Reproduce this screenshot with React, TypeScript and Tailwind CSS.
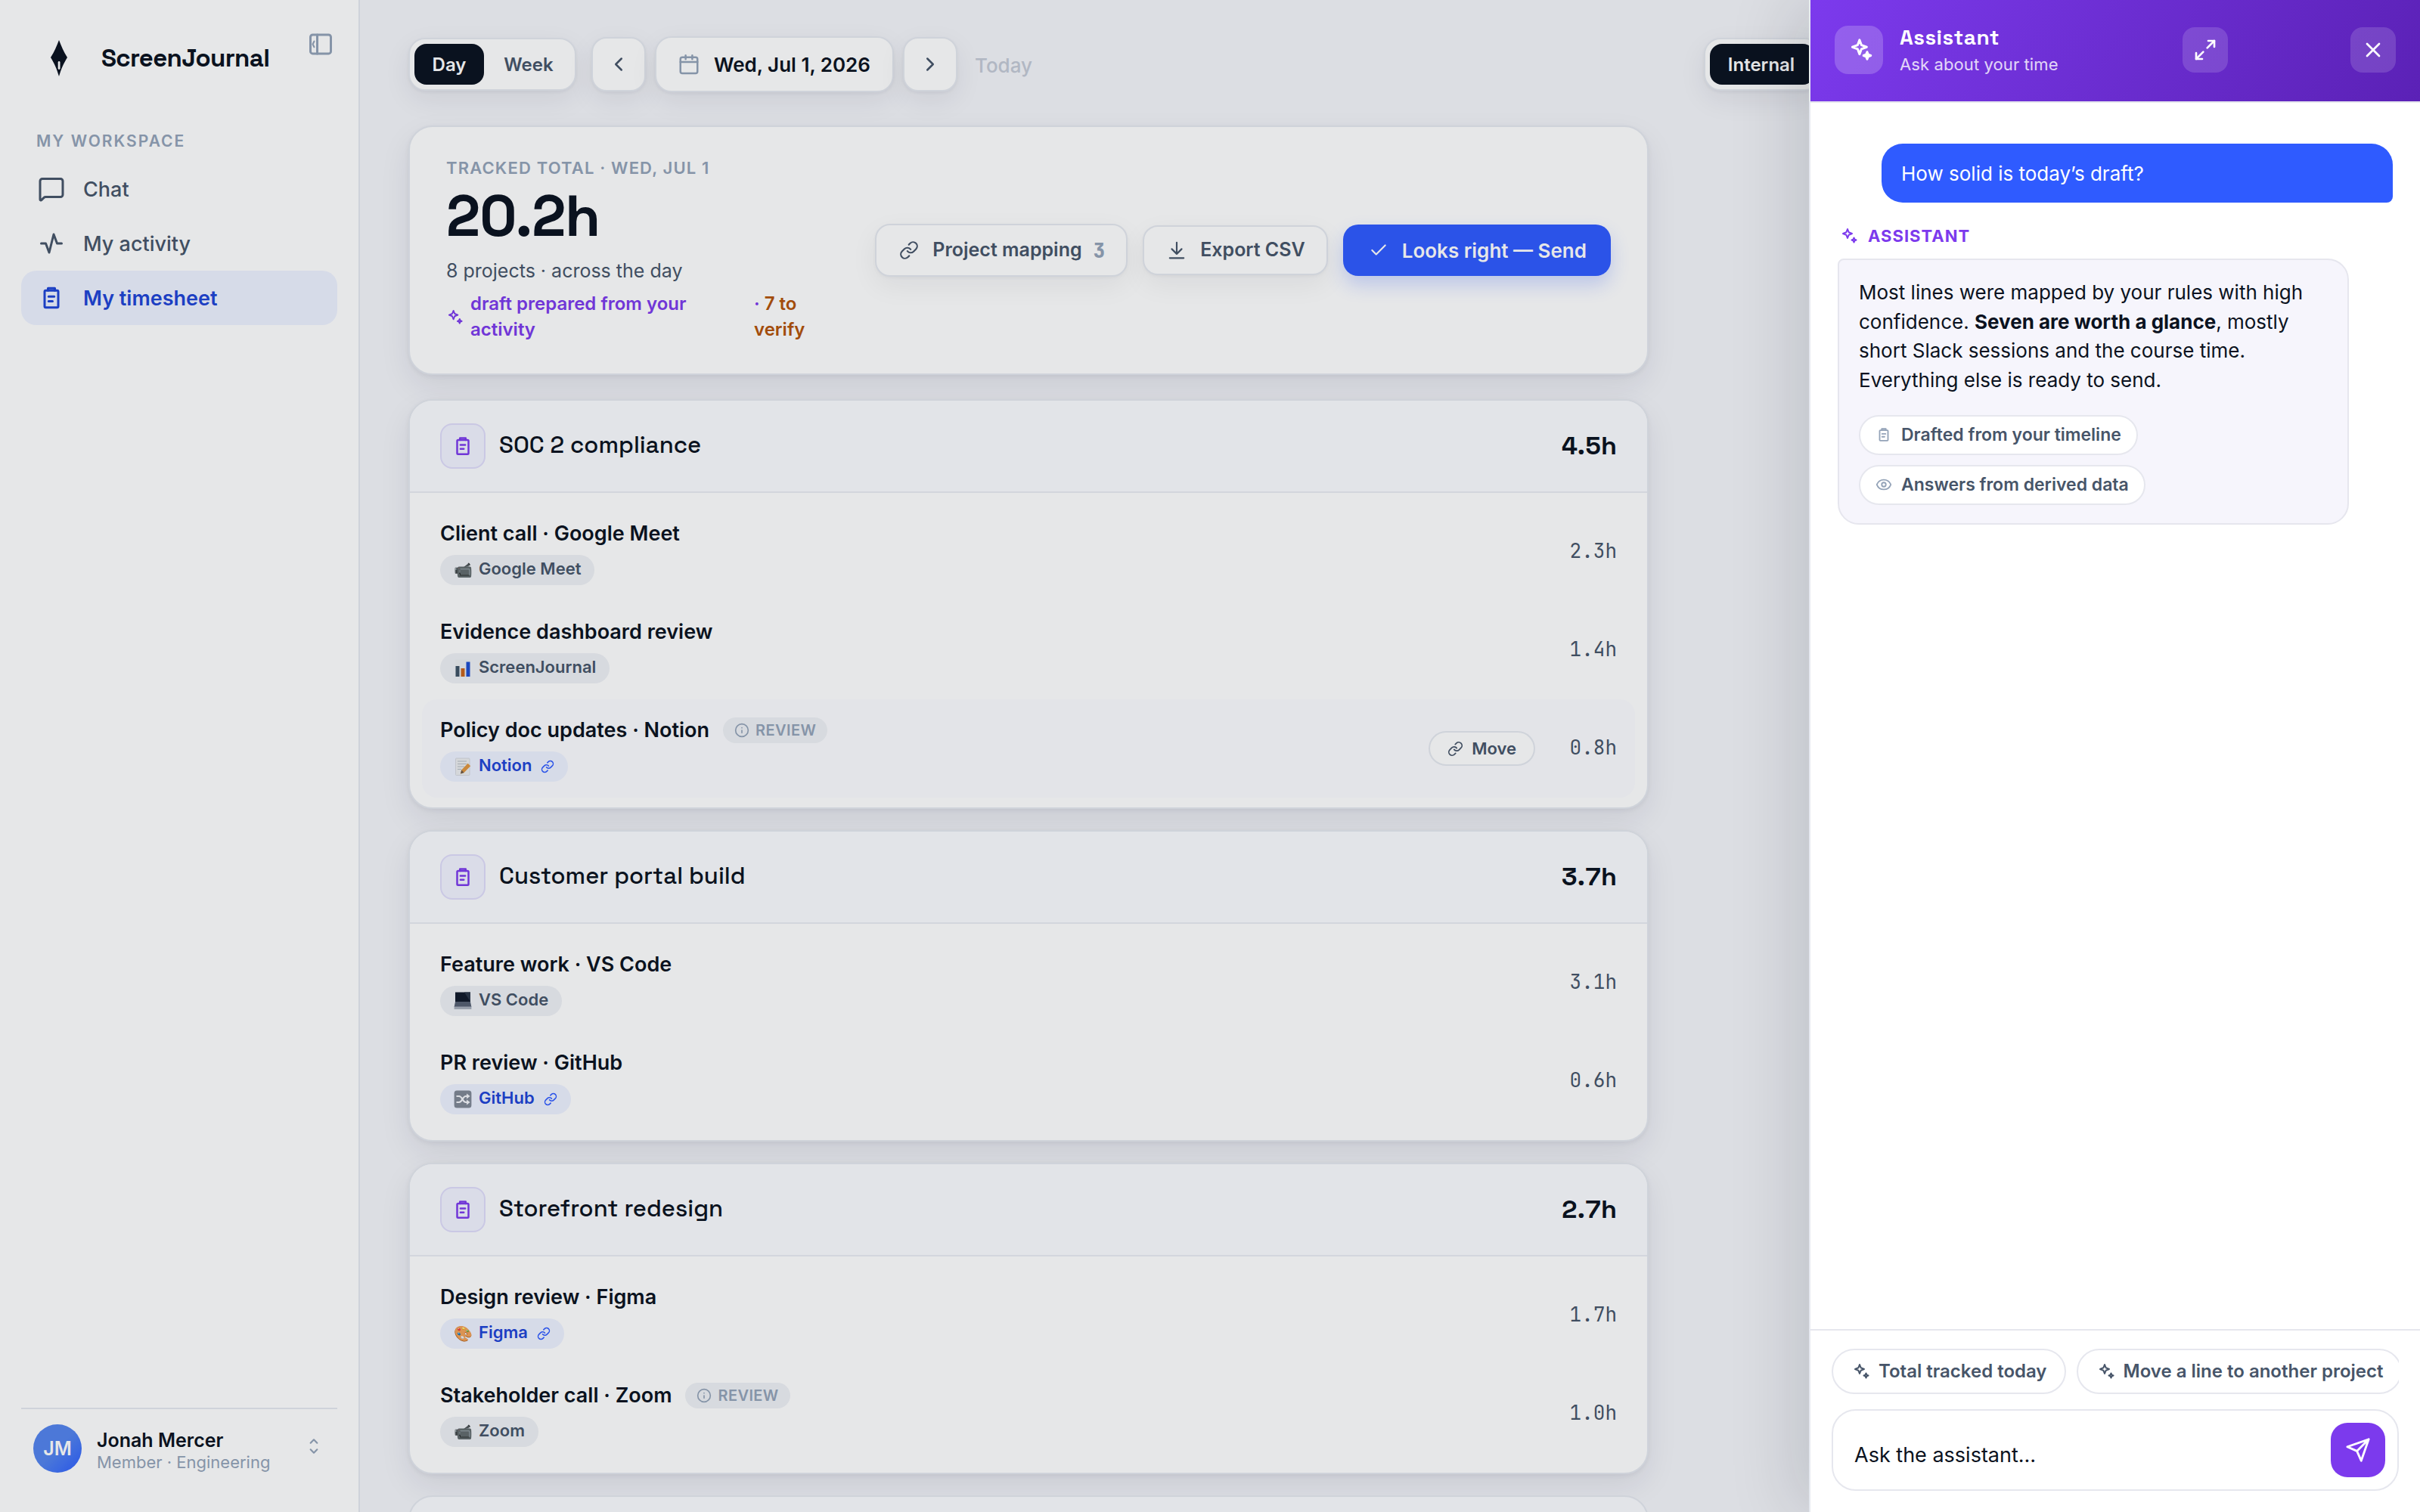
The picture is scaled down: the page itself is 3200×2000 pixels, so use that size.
import React from "react";
import {
  Check,
  ChevronLeft,
  ChevronRight,
  Eye,
  Info,
  Link,
  Maximize2,
  MessageSquare,
  X,
} from "lucide-react";

type AppIcon = "camera" | "chart" | "memo" | "laptop" | "shuffle" | "palette";

type Line = {
  title: string;
  app: string;
  icon: AppIcon;
  hours: string;
  linked?: boolean;
  review?: boolean;
  active?: boolean;
};

type Project = {
  name: string;
  total: string;
  lines: Line[];
};

const projects: Project[] = [
  {
    name: "SOC 2 compliance",
    total: "4.5h",
    lines: [
      { title: "Client call · Google Meet", app: "Google Meet", icon: "camera", hours: "2.3h" },
      { title: "Evidence dashboard review", app: "ScreenJournal", icon: "chart", hours: "1.4h" },
      {
        title: "Policy doc updates · Notion",
        app: "Notion",
        icon: "memo",
        hours: "0.8h",
        linked: true,
        review: true,
        active: true,
      },
    ],
  },
  {
    name: "Customer portal build",
    total: "3.7h",
    lines: [
      { title: "Feature work · VS Code", app: "VS Code", icon: "laptop", hours: "3.1h" },
      { title: "PR review · GitHub", app: "GitHub", icon: "shuffle", hours: "0.6h", linked: true },
    ],
  },
  {
    name: "Storefront redesign",
    total: "2.7h",
    lines: [
      { title: "Design review · Figma", app: "Figma", icon: "palette", hours: "1.7h", linked: true },
      { title: "Stakeholder call · Zoom", app: "Zoom", icon: "camera", hours: "1.0h", review: true },
    ],
  },
];

type IconProps = { size: number; className?: string };

function Svg({ size, className, children }: IconProps & { children: React.ReactNode }) {
  return (
    <svg
      width={size}
      height={size}
      viewBox="0 0 24 24"
      fill="none"
      stroke="currentColor"
      strokeWidth="2"
      strokeLinecap="round"
      strokeLinejoin="round"
      className={`shrink-0 ${className ?? ""}`}
    >
      {children}
    </svg>
  );
}

function Clipboard(props: IconProps) {
  return (
    <Svg {...props}>
      <path d="M9 5.5V3.5h6v2" />
      <rect x="6" y="5.5" width="12" height="15" rx="1" />
      <path d="M9.5 10.8h5M9.5 15h3.5" />
    </Svg>
  );
}

function Sparkles(props: IconProps) {
  return (
    <Svg {...props}>
      <path d="M9 3l1.7 4.3L15 9l-4.3 1.7L9 15l-1.7-4.3L3 9l4.3-1.7z" />
      <path d="M17.5 14.5l.9 2.1 2.1.9-2.1.9-.9 2.1-.9-2.1-2.1-.9 2.1-.9z" />
    </Svg>
  );
}

function SparklesHeader(props: IconProps) {
  return (
    <Svg {...props}>
      <path d="M12.6 3.2l1.7 4.6 4.6 1.7-4.6 1.7-1.7 4.6-1.7-4.6-4.6-1.7 4.6-1.7z" />
      <path d="M19.3 13.8l.9 2.3 2.3.9-2.3.9-.9 2.3-.9-2.3-2.3-.9 2.3-.9z" fill="currentColor" />
    </Svg>
  );
}

function Calendar(props: IconProps) {
  return (
    <Svg {...props}>
      <rect x="3" y="4.5" width="18" height="17" rx="2" />
      <path d="M8.5 2.5v4M15.5 2.5v4M3 9.5h18" />
    </Svg>
  );
}

function Download(props: IconProps) {
  return (
    <Svg {...props}>
      <path d="M12 2.5v14M6 10.5l6 6 6-6M3.5 21.5h17" />
    </Svg>
  );
}

// small colour glyphs in the app badges, 24x24 each
function AppGlyph({ icon }: { icon: AppIcon }) {
  if (icon === "palette") {
    return <span className="w-[24px] text-[20px] leading-none">🎨</span>;
  }
  if (icon === "camera") {
    return <span className="w-[24px] text-[20px] leading-none grayscale-70">📹</span>;
  }
  return (
    <svg width="24" height="24" viewBox="0 0 24 24" className="shrink-0">
      {icon === "chart" && (
        <>
          <rect x="2" y="0.5" width="20" height="23" fill="#eceff1" />
          <rect x="2.5" y="9" width="5" height="14" fill="#3f5366" />
          <rect x="9.5" y="12" width="5" height="11" fill="#c8641b" />
          <rect x="16.5" y="3.5" width="5" height="19.5" fill="#1f4fd0" />
        </>
      )}
      {icon === "memo" && (
        <>
          <rect x="2.5" y="1" width="18.5" height="22.5" rx="1" fill="#eceef0" stroke="#cfd3d8" strokeWidth="0.8" />
          <path d="M5 5h12M5 8.5h12M5 12h9M5 15.5h5" stroke="#b4bac2" strokeWidth="1.2" />
          <path d="M9 21.5l1.2-5L18.6 7.8l3.6 3.4-8.6 8.9z" fill="#e0963f" />
          <path d="M9 21.5l1.2-5 3.4 3.6z" fill="#6b5a4b" />
        </>
      )}
      {icon === "laptop" && (
        <>
          <path d="M2 0.5h20v12.5H2z" fill="#111a2b" />
          <path d="M14 0.5h8v12.5z" fill="#2b3648" />
          <path d="M2 13h20l1.4 7H0.6z" fill="#566072" />
          <path d="M0.6 19.5h22.8v3.5H0.6z" fill="#a9b0bd" />
        </>
      )}
      {icon === "shuffle" && (
        <>
          <rect x="0.6" y="0.6" width="22.8" height="22.8" rx="3.5" fill="#808896" />
          <g fill="none" stroke="#f4f5fa" strokeWidth="2.2">
            <path d="M3.5 8h3.5c4.5 0 4.5 8 9 8h2.5M3.5 16h3.5c4.5 0 4.5-8 9-8h2.5" />
          </g>
          <path d="M17 4.4L21.6 8 17 11.6zM17 12.4l4.6 3.6-4.6 3.6z" fill="#f4f5fa" />
        </>
      )}
    </svg>
  );
}

function Sidebar() {
  return (
    <aside className="flex w-[476px] shrink-0 flex-col border-r-2 border-[#e6e9f0] bg-white px-[28px]">
      <div className="flex h-[164px] items-start justify-between pr-[4px] pl-[18px]">
        <div className="flex items-center gap-[24px] pt-[45px]">
          <svg width="64" height="64" viewBox="0 0 64 64">
            <path d="M32 8c3 8 6 15 11 23-5 8-8 15-11 25-3-10-6-17-11-25 5-8 8-15 11-23z" fill="#0b1220" />
            <rect x="30.7" y="36" width="2.8" height="11" rx="1.4" fill="#ffffff" />
          </svg>
          <span className="font-['Space_Grotesk'] text-[33px] leading-[40px] font-semibold tracking-[-0.66px] text-[#0b1220]">
            ScreenJournal
          </span>
        </div>
        <Svg size={36} className="mt-[40px] text-[#94a3b8]">
          <rect x="3" y="4" width="18" height="16.6" rx="2" />
          <path d="M9 4v16.6" />
          <path d="M6.3 9.8L5 12.3l1.3 2.5" strokeWidth="1.4" />
        </Svg>
      </div>

      <p className="pt-[2px] pl-[20px] text-[21px] leading-[42px] font-semibold tracking-[2px] text-[#94a3b8]">
        MY WORKSPACE
      </p>

      <nav className="mt-[6px] flex flex-col text-[27px] text-[#475569]">
        <a className="flex h-[72px] items-center gap-[24px] pl-[22px] font-medium">
          <MessageSquare size={36} />
          <span className="pt-[2px]">Chat</span>
        </a>
        <a className="flex h-[72px] items-center gap-[24px] pl-[22px] font-medium">
          <Svg size={36}>
            <path d="M3 12h4l3 8 4-16 3 8h4" />
          </Svg>
          <span className="pt-[2px]">My activity</span>
        </a>
        <a className="flex h-[72px] items-center gap-[24px] rounded-[20px] bg-[#eef2ff] pl-[22px] font-semibold text-[#1f45d6]">
          <Clipboard size={36} />
          <span className="pt-[2px]">My timesheet</span>
        </a>
      </nav>

      <div className="mt-auto flex h-[138px] items-start border-t-2 border-[#e6e9f0] pt-[20px] pr-[18px] pl-[16px]">
        <div className="flex size-[64px] items-center justify-center rounded-full bg-linear-135 from-[#5484ee] from-50% to-[#2f5bff] pt-[2px] text-[25px] font-semibold text-white">
          JM
        </div>
        <div className="ml-[20px] flex flex-col pt-[6px]">
          <span className="text-[25px] leading-[31px] font-semibold text-[#0b1220]">Jonah Mercer</span>
          <span className="text-[22px] leading-[26px] text-[#94a3b8]">Member · Engineering</span>
        </div>
        <Svg size={26} className="mt-[16px] ml-auto text-[#94a3b8]">
          <path d="M8 8l4-4 4 4M8 16l4 4 4-4" />
        </Svg>
      </div>
    </aside>
  );
}

function Toolbar() {
  return (
    <div className="flex h-[74px] w-[1868px] items-center">
      <div className="flex h-[70px] gap-[4px] rounded-[22px] border-2 border-[#e6e9f0] bg-white p-[6px] text-[24px] font-semibold shadow-[0_2px_4px_rgba(11,18,32,0.05),0_12px_36px_rgba(11,18,32,0.07)]">
        <button className="w-[92px] rounded-[16px] bg-[#0b1220] pt-[1px] text-white">Day</button>
        <button className="w-[110px] rounded-[16px] pt-[1px] text-[#475569]">Week</button>
      </div>
      <button className="ml-[20px] flex size-[72px] items-center justify-center rounded-[20px] border-2 border-[#e6e9f0] bg-white text-[#475569] shadow-[0_2px_4px_rgba(11,18,32,0.05),0_12px_36px_rgba(11,18,32,0.07)]">
        <ChevronLeft size={30} />
      </button>
      <button className="ml-[12px] flex h-[74px] items-center gap-[18px] rounded-[22px] border-2 border-[#e6e9f0] bg-white pr-[29px] pl-[28px] text-[26px] font-semibold text-[#0b1220] shadow-[0_2px_4px_rgba(11,18,32,0.05),0_12px_36px_rgba(11,18,32,0.07)]">
        <Calendar size={30} className="text-[#94a3b8]" />
        Wed, Jul 1, 2026
      </button>
      <button className="ml-[12px] flex size-[72px] items-center justify-center rounded-[20px] border-2 border-[#e6e9f0] bg-white text-[#475569] shadow-[0_2px_4px_rgba(11,18,32,0.05),0_12px_36px_rgba(11,18,32,0.07)]">
        <ChevronRight size={30} />
      </button>
      <span className="ml-[23px] pt-[3px] text-[26px] font-medium text-[#c4cad6]">Today</span>

      <div className="ml-auto flex h-[70px] rounded-[22px] border-2 border-[#e6e9f0] bg-white p-[6px] text-[24px] font-semibold shadow-[0_2px_4px_rgba(11,18,32,0.05),0_12px_36px_rgba(11,18,32,0.07)]">
        <button className="w-[139px] rounded-[16px] bg-[#0b1220] pt-[1px] pr-[3px] text-white">Internal</button>
      </div>
    </div>
  );
}

function Summary() {
  return (
    <section className="mt-[44px] flex h-[330px] rounded-[32px] border-2 border-[#e6e9f0] bg-white px-[48px] shadow-[0_2px_6px_rgba(11,18,32,0.06),0_16px_40px_rgba(11,18,32,0.08)]">
      <div className="w-[484px] pt-[39px]">
        <p className="text-[22px] leading-[30px] font-semibold tracking-[1.15px] text-[#94a3b8]">
          TRACKED TOTAL · WED, JUL 1
        </p>
        <p className="mt-[9px] font-['Space_Grotesk'] text-[76px] leading-[80px] font-bold tracking-[-1px] text-[#0b1220]">
          20.2h
        </p>
        <p className="mt-[14px] text-[25px] leading-[36px] text-[#475569]">8 projects · across the day</p>
        <div className="mt-[9px] flex items-center text-[24px] leading-[34px] font-semibold text-[#7c3aed]">
          <Sparkles size={23} className="ml-[1px]" />
          <p className="ml-[8px] w-[364px]">draft prepared from your activity</p>
          <p className="ml-[11px] w-[74px]">
            · <span className="text-[#b45309]">7 to verify</span>
          </p>
        </div>
      </div>

      <div className="ml-auto flex items-center gap-[20px] text-[25px] font-semibold text-[#475569]">
        <button className="flex h-[70px] items-center rounded-[20px] border-2 border-[#e6e9f0] bg-white pr-[28px] pl-[30px] shadow-[0_2px_4px_rgba(11,18,32,0.04),0_12px_36px_rgba(11,18,32,0.06)]">
          <Link size={26} />
          <span className="ml-[18px]">Project mapping</span>
          <span className="ml-[15px] font-['JetBrains_Mono'] text-[26px] font-extrabold text-[#94a3b8]">3</span>
        </button>
        <button className="flex h-[66px] items-center gap-[18px] rounded-[20px] border-2 border-[#e6e9f0] bg-white pr-[28px] pl-[30px] shadow-[0_2px_4px_rgba(11,18,32,0.04),0_12px_36px_rgba(11,18,32,0.06)]">
          <Download size={26} />
          Export CSV
        </button>
        <button className="flex h-[68px] items-center gap-[18px] rounded-[20px] bg-[#2f5bff] pr-[32px] pl-[34px] text-[26px] text-white shadow-[0_12px_24px_rgba(47,91,255,0.22)]">
          <Check size={26} />
          Looks right — Send
        </button>
      </div>
    </section>
  );
}

function LineRow({ line }: { line: Line }) {
  return (
    <div className={`flex h-[130px] rounded-[20px] px-[24px] ${line.active ? "bg-[#fcfcff]" : ""}`}>
      <div className="pt-[24px]">
        <div className="flex h-[34px] items-center gap-[18px]">
          <span className="text-[27px] font-semibold text-[#0b1220]">{line.title}</span>
          {line.review && (
            <span className="flex h-[34px] items-center gap-[8px] rounded-full bg-[#eff1f5] px-[15px] text-[20px] font-semibold tracking-[0.4px] text-[#94a3b8]">
              <Info size={20} />
              REVIEW
            </span>
          )}
        </div>
        <span
          className={`mt-[11px] flex h-[40px] w-fit items-center rounded-full px-[18px] text-[22px] font-semibold ${
            line.linked ? "bg-[#eef2ff] text-[#1f45d6]" : "bg-[#eff1f5] text-[#475569]"
          }`}
        >
          <AppGlyph icon={line.icon} />
          <span className="mb-[3px] ml-[9px]">{line.app}</span>
          {line.linked && <Link size={18} className="ml-[12px] text-[#2f5bff]" />}
        </span>
      </div>
      <div className="ml-auto flex items-center">
        {line.active && (
          <button className="flex h-[46px] items-center gap-[11px] rounded-full border-2 border-[#e6e9f0] bg-white px-[23px] text-[22px] font-semibold text-[#475569]">
            <Link size={21} />
            Move
          </button>
        )}
        <span className="w-[108px] pb-[4px] text-right font-['JetBrains_Mono'] text-[26px] text-[#475569]">
          {line.hours}
        </span>
      </div>
    </div>
  );
}

function ProjectCard({ project }: { project: Project }) {
  return (
    <section className="overflow-hidden rounded-[32px] border-2 border-[#e6e9f0] bg-white shadow-[0_2px_6px_rgba(11,18,32,0.06),0_16px_40px_rgba(11,18,32,0.08)]">
      <header className="flex h-[122px] items-center border-b-2 border-[#eaecf3] bg-[#fbfcff] px-[40px] font-['Space_Grotesk'] text-[#0b1220]">
        <div className="flex size-[60px] items-center justify-center rounded-[16px] border-2 border-[#e0ddfb] bg-[#f2f3ff] text-[#7c3aed]">
          <Clipboard size={30} />
        </div>
        <h2 className="ml-[18px] pb-[3px] text-[31px] font-medium">{project.name}</h2>
        <span className="ml-auto pb-[1px] text-[34px] font-semibold tabular-nums">{project.total}</span>
      </header>
      <div className="px-[16px] py-[13px]">
        {project.lines.map((line) => (
          <LineRow key={line.title} line={line} />
        ))}
      </div>
    </section>
  );
}

function Source({ icon, children }: { icon: React.ReactNode; children: React.ReactNode }) {
  return (
    <span className="flex h-[53px] w-fit items-center gap-[12px] rounded-full border-2 border-[#e6e7ee] bg-white px-[20px] text-[23px] font-semibold text-[#475569]">
      <span className="text-[#94a3b8]">{icon}</span>
      {children}
    </span>
  );
}

function Chip({ children }: { children: React.ReactNode }) {
  return (
    <button className="flex h-[60px] shrink-0 items-center gap-[10px] rounded-full border-2 border-[#e6e7ee] bg-white pr-[23px] pl-[26px] text-[24px] font-semibold whitespace-nowrap text-[#475569]">
      <Sparkles size={24} />
      {children}
    </button>
  );
}

function AssistantPanel() {
  return (
    <div className="absolute inset-y-0 right-0 flex w-[808px] flex-col border-l-2 border-[#e6e9f0] bg-white shadow-[-24px_0_80px_rgba(11,18,32,0.12)]">
      <header className="flex h-[136px] items-center border-b-2 border-[#e6e7ee] bg-linear-120 from-[#7c3aed] to-[#5b21b6] bg-origin-border px-[32px] pb-[2px] text-white">
        <div className="flex size-[64px] items-center justify-center rounded-[18px] bg-white/20">
          <SparklesHeader size={36} />
        </div>
        <div className="ml-[22px] pt-[2px]">
          <h2 className="font-['Space_Grotesk'] text-[28px] leading-[36px] font-bold tracking-[0.5px]">Assistant</h2>
          <p className="text-[22px] leading-[36px] tracking-[0.1px] text-white/80">Ask about your time</p>
        </div>
        <button className="ml-auto flex size-[60px] items-center justify-center rounded-[16px] bg-white/15">
          <Maximize2 size={32} />
        </button>
        <button className="ml-[162px] flex size-[60px] items-center justify-center rounded-[16px] bg-white/15">
          <X size={32} />
        </button>
      </header>

      <div className="flex-1 pt-[54px] pr-[36px] pl-[36px] text-[26px]">
        <div className="ml-[58px] flex h-[78px] items-center rounded-[28px] rounded-br-[8px] bg-[#2f5bff] px-[26px] text-white">
          How solid is today’s draft?
        </div>
        <div className="mt-[30px] ml-[4px] flex h-[28px] items-center gap-[12px] text-[22px] font-bold tracking-[1px] text-[#7c3aed]">
          <Sparkles size={24} />
          ASSISTANT
        </div>
        <div className="mt-[16px] w-[676px] rounded-[28px] rounded-tl-[8px] border-2 border-[#e6e6ee] bg-[#f6f5fc] px-[26px] pt-[24px] pb-[24px] text-[#0b1220]">
          <p className="leading-[38.7px]">
            Most lines were mapped by your rules with high confidence. <b>Seven are worth a glance</b>, mostly short
            Slack sessions and the course time. Everything else is ready to send.
          </p>
          <div className="mt-[26px] flex flex-col gap-[13px]">
            <Source icon={<Clipboard size={22} />}>Drafted from your timeline</Source>
            <Source icon={<Eye size={22} />}>Answers from derived data</Source>
          </div>
        </div>
      </div>

      <footer className="h-[242px] border-t-2 border-[#e6e7ee] px-[28px] pt-[24px]">
        <div className="flex gap-[14px] overflow-hidden">
          <Chip>Total tracked today</Chip>
          <Chip>Move a line to another project</Chip>
        </div>
        <div className="mt-[20px] flex h-[108px] items-center justify-between rounded-[32px] border-2 border-[#e6e7ee] bg-white pr-[16px] pl-[28px]">
          <span className="pt-[14px] text-[27px] text-[#0b1220]">Ask the assistant…</span>
          <button className="flex size-[72px] items-center justify-center rounded-[22px] bg-[#7c3aed] text-white">
            <Svg size={34}>
              <path d="M22 2L11 13M22 2l-7 20-4-9-9-4z" />
            </Svg>
          </button>
        </div>
      </footer>
    </div>
  );
}

export default function App() {
  return (
    <div className="relative h-[2000px] w-[3200px] overflow-hidden bg-[#f4f5fa] font-['Inter',sans-serif]">
      <div className="flex h-full">
        <Sidebar />
        <main className="h-full flex-1 overflow-hidden px-[64px] pt-[48px]">
          <Toolbar />
          <div className="w-[1640px]">
            <Summary />
            <div className="mt-[32px] flex flex-col gap-[28px]">
              {projects.map((project) => (
                <ProjectCard key={project.name} project={project} />
              ))}
              <section className="h-[122px] rounded-[32px] border-2 border-[#e6e9f0] bg-[#fbfcff]" />
            </div>
          </div>
        </main>
      </div>
      <div className="absolute inset-0 bg-[#0b1220]/10" />
      <AssistantPanel />
    </div>
  );
}
